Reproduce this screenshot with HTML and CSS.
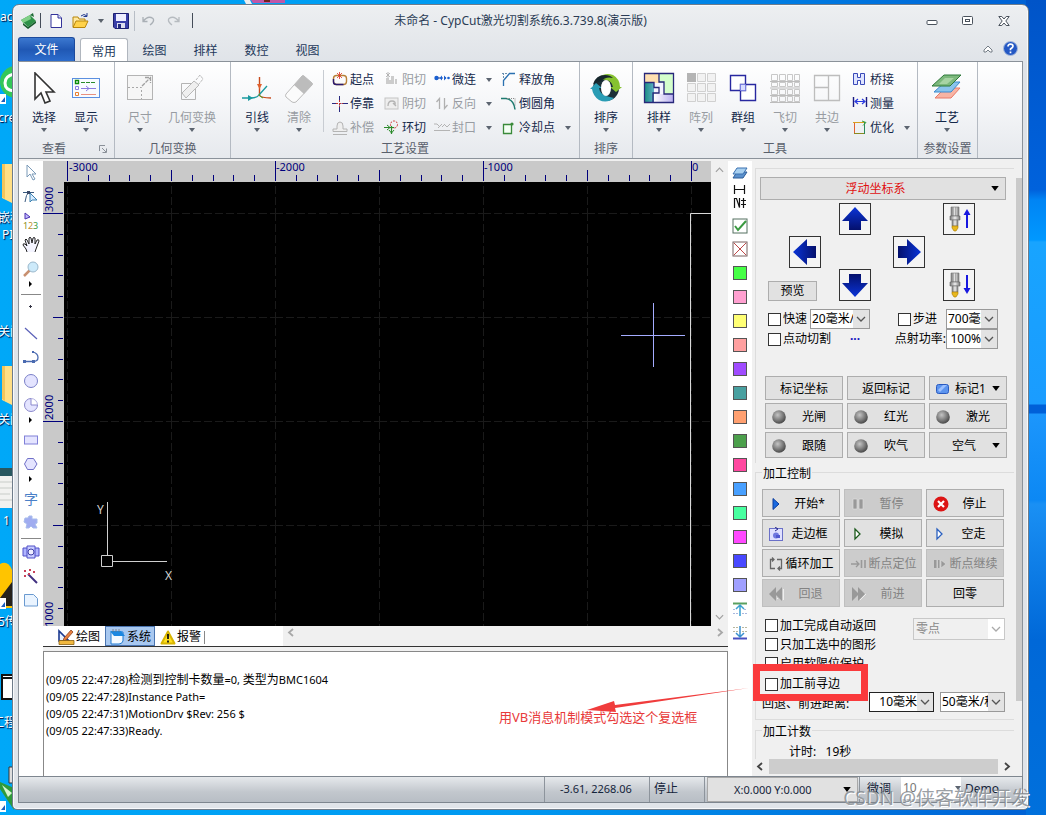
FILE: index.html
```html
<!DOCTYPE html>
<html lang="zh-CN">
<head>
<meta charset="utf-8">
<title>未命名 - CypCut激光切割系统6.3.739.8(演示版)</title>
<link rel="stylesheet" href="styles.css">
</head>
<body>
<svg class="defs" aria-hidden="true">
  <defs>
    <linearGradient id="navy" x1="0" y1="0" x2="0" y2="1"><stop offset="0" stop-color="#0a34d8"/><stop offset="1" stop-color="#04106c"/></linearGradient>
    <radialGradient id="ball" cx=".4" cy=".35" r=".65"><stop offset="0" stop-color="#c4c4c4"/><stop offset=".6" stop-color="#7c7c7c"/><stop offset="1" stop-color="#4a4a4a"/></radialGradient>
    <linearGradient id="steel"><stop offset="0" stop-color="#777"/><stop offset=".5" stop-color="#eee"/><stop offset="1" stop-color="#777"/></linearGradient>
    <linearGradient id="lilac"><stop offset="0" stop-color="#fff"/><stop offset="1" stop-color="#b9b0f0"/></linearGradient>
    <linearGradient id="teal"><stop offset="0" stop-color="#1f8f86"/><stop offset="1" stop-color="#7fc0e8"/></linearGradient>
  </defs>
  <symbol id="tri" viewBox="0 0 6 4"><path d="M0 0h6L3 4z" fill="currentColor"/></symbol>
  <symbol id="chev" viewBox="0 0 10 6"><path d="M1 1l4 4 4-4" fill="none" stroke="currentColor" stroke-width="1.3"/></symbol>
  <symbol id="prev" viewBox="0 0 8 9"><path d="M6 1L2 4.500 6 8" fill="none" stroke="currentColor" stroke-width="1.8"/></symbol>
  <symbol id="next" viewBox="0 0 8 9"><path d="M2 1l4 3.500L2 8" fill="none" stroke="currentColor" stroke-width="1.8"/></symbol>
  <symbol id="lamp" viewBox="0 0 14 14"><circle cx="7" cy="7" r="6.800" fill="url(#ball)"/></symbol>
  <symbol id="arrow" viewBox="0 0 30 30"><path d="M15 3l13 14h-7v9H9v-9H2z" fill="url(#navy)"/></symbol>
  <symbol id="head" viewBox="0 0 12 26"><path d="M2 1h8v9H2z" fill="url(#steel)" stroke="#777" stroke-width=".6"/><path d="M4 1v9M6.500 1v9" stroke="#888" stroke-width=".6"/><path d="M1 10h10v4H1z" fill="url(#steel)" stroke="#666" stroke-width=".6"/><path d="M3 14h6v6H3z" fill="url(#steel)" stroke="#777" stroke-width=".6"/><path d="M3 20h6v2l-2 3H5l-2-3z" fill="#e8b820" stroke="#a87800" stroke-width=".6"/></symbol>
</svg>

<div class="desktop" aria-hidden="true">
  <span class="d-text d1">ac</span>
  <svg class="d-icon d2" width="14" height="42" viewBox="0 0 14 42"><circle cx="16" cy="16" r="16" fill="#34c759"/><path d="M14 8q-9 2-9 9t9 8" fill="none" stroke="#fff" stroke-width="3"/><path d="M0 28h6v10H0z" fill="#fff"/><path d="M1 36l4-5v5z" fill="#1c5fc0"/></svg>
  <span class="d-text d3">cre</span>
  <svg class="d-icon d4" width="14" height="42" viewBox="0 0 14 42"><path d="M2 1h12v40L2 35z" fill="#ffdf86"/><path d="M2 1h3v35l-3-2z" fill="#f3c55b"/></svg>
  <span class="d-text d5">嵌程</span>
  <span class="d-text d6">PI</span>
  <span class="d-text d7">关闭</span>
  <svg class="d-icon d8" width="14" height="42" viewBox="0 0 14 42"><path d="M2 1h12v40L2 35z" fill="#ffdf86"/><path d="M2 1h3v35l-3-2z" fill="#f3c55b"/></svg>
  <span class="d-text d9">关闭</span>
  <svg class="d-icon d10" width="14" height="40" viewBox="0 0 14 40"><path d="M0 0h14v40H0z" fill="#f2f2f0"/><path d="M0 0h14v8H0z" fill="#285860"/><path d="M0 14h12M0 20h12M0 26h10M0 32h12" stroke="#c8ccc8"/></svg>
  <span class="d-text d11">1</span>
  <svg class="d-icon d12" width="14" height="48" viewBox="0 0 14 48"><path d="M0 2q8-4 12 6v38H0z" fill="#ffc400"/><path d="M6 28l6-8v24H0v-8z" fill="#26221c"/><path d="M0 36h6v11H0z" fill="#fff"/><path d="M1 45l4-5v5z" fill="#1c5fc0"/></svg>
  <span class="d-text d13">5传</span>
  <svg class="d-icon d14" width="14" height="30" viewBox="0 0 14 30"><path d="M2 2h14v24H2z" fill="#fff" stroke="#111" stroke-width="2"/><path d="M2 5h12" stroke="#111" stroke-width="2"/></svg>
  <span class="d-text d15">工程</span>
  <svg class="d-icon d16" width="14" height="48" viewBox="0 0 14 48"><path d="M9 2h5v16H9z" fill="#ddd" stroke="#333"/><path d="M0 17l14 6v22L0 24z" fill="#2f9a3a"/><path d="M2 20l10 8-4 4z" fill="#d8f5d0"/><path d="M0 36h6v11H0z" fill="#fff"/><path d="M1 45l4-5v5z" fill="#1c5fc0"/></svg>
  <svg class="d-icon d17" width="42" height="4" viewBox="0 0 42 4"><path d="M0 0h6l2 4H2z" fill="#eee"/><path d="M7 0h34v3H9z" fill="#c058a8"/><path d="M20 0h6v2h-6z" fill="#702020"/></svg>
</div>

<div class="window">
  <header class="titlebar">
    <div class="quick">
      <svg width="18" height="16" viewBox="0 0 18 16"><path d="M1 7l9-5 6 6-8 6z" fill="#2e9148"/><path d="M1 7l9-5 1 4-8 4z" fill="#7fcf86"/><path d="M10 2l3-2 1 4z" fill="#1d6b34"/><path d="M3 10l5 4 8-6v2l-8 6-5-4z" fill="#175a2c"/></svg>
      <i class="bar"></i>
      <button aria-label="新建"><svg width="12" height="14" viewBox="0 0 12 14"><path d="M1 .500h7l3.500 3.500v9.500H1z" fill="#fff" stroke="#33339a"/><path d="M8 .500v3.500h3.500" fill="#dfe4ff" stroke="#33339a"/></svg></button>
      <button aria-label="打开"><svg width="17" height="16" viewBox="0 0 17 16"><path d="M1 14V4h5l1 2h6v3" fill="#ffe9a0" stroke="#b8860b"/><path d="M1 14.500l3-6.500h12l-3 6.500z" fill="#ffd24a" stroke="#b8860b"/><path d="M9 3q3-3 6 0M15 0v3.500h-3.500" fill="none" stroke="#223a90"/></svg></button>
      <svg class="tri" width="6" height="4"><use href="#tri"/></svg>
      <button aria-label="保存"><svg width="16" height="16" viewBox="0 0 16 16"><path d="M.500.500h15v15H2L.500 14z" fill="#3a3fa8" stroke="#1c1f70"/><path d="M3 1h10v7H3z" fill="#eef"/><path d="M4 10h8v5H4z" fill="#dde"/><path d="M5 11h3v4H5z" fill="#222a80"/></svg></button>
      <i class="bar light"></i>
      <button disabled aria-label="撤销"><svg width="14" height="10" viewBox="0 0 14 10"><path d="M1 1v4.500h4.500M1 5.500Q6-1 11 2.500q2 3-3 6.500" fill="none" stroke="#aab0b6" stroke-width="1.300"/></svg></button>
      <button disabled aria-label="重做"><svg width="14" height="10" viewBox="0 0 14 10"><path d="M13 1v4.500H8.500M13 5.500Q8-1 3 2.500q-2 3 3 6.500" fill="none" stroke="#b6bbc0" stroke-width="1.300"/></svg></button>
      <i class="bar"></i>
    </div>
    <h1>未命名 - CypCut激光切割系统6.3.739.8(演示版)</h1>
    <div class="winbtns">
      <button aria-label="最小化"><svg width="12" height="12" viewBox="0 0 12 12"><rect x="1" y="5.500" width="10" height="4" rx="1" fill="#fff" stroke="#4a525c"/></svg></button>
      <button aria-label="还原"><svg width="12" height="12" viewBox="0 0 12 12"><rect x=".500" y="1.500" width="10" height="8" rx="1" fill="#fff" stroke="#4a525c"/><rect x="3.500" y="4.500" width="4" height="2" fill="none" stroke="#4a525c"/></svg></button>
      <button aria-label="关闭"><svg width="12" height="12" viewBox="0 0 12 12"><path d="M.800 1.500h3L6 4l2.200-2.500h3L7.800 6l3.400 4.500h-3L6 8l-2.200 2.500h-3L4.200 6z" fill="#fff" stroke="#4a525c"/></svg></button>
    </div>
  </header>

  <nav class="tabs">
    <button class="file">文件</button>
    <button class="on">常用</button>
    <button>绘图</button>
    <button>排样</button>
    <button>数控</button>
    <button>视图</button>
    <span class="help">
      <svg width="10" height="8" viewBox="0 0 10 8"><path d="M1 5l4-4 4 4v2H7L5 5 3 7H1z" fill="#fff" stroke="#66707a" stroke-width=".9"/></svg>
      <svg width="15" height="15" viewBox="0 0 15 15"><circle cx="7.500" cy="7.500" r="7" fill="#2458c4" stroke="#a9bbdc"/><path d="M5 5.500q0-2.300 2.500-2.300T10 5.300Q10 6.500 7.500 8v1.200M7.500 10.500v1.700" fill="none" stroke="#fff" stroke-width="1.700"/></svg>
    </span>
  </nav>

  <section class="ribbon">
    <div class="group g-view">
      <div class="tools">
        <button class="big"><svg width="32" height="32" viewBox="0 0 32 32"><path d="M7 1v26l6-6 4 10 5-2-4-9h8z" fill="#fff" stroke="#333" stroke-width="1.600"/></svg>选择<svg class="tri" width="6" height="4"><use href="#tri"/></svg></button>
        <button class="big"><svg width="32" height="32" viewBox="0 0 32 32"><rect x="2.500" y="6.500" width="27" height="19" fill="#f8fbff" stroke="#5b8fe0"/><path d="M5.500 8.500h3v3h-3z" fill="none" stroke="#0a8a0a" stroke-width="1.400"/><path d="M5.500 14.500h3v3h-3z" fill="none" stroke="#8a7ae0"/><path d="M5.500 20.500h3v3h-3z" fill="none" stroke="#e88030"/><path d="M11 10.500h15" stroke="#2a8a2a" stroke-dasharray="4 1"/><path d="M11 16.500h15M16 14l3 2.500-3 2.500" stroke="#8a7ae0" fill="none"/><path d="M11 22.500h15" stroke="#e89080"/></svg>显示<svg class="tri" width="6" height="4"><use href="#tri"/></svg></button>
      </div>
      <div class="cap">查看<svg class="launch" width="8" height="8" viewBox="0 0 8 8"><path d="M.500 6V.500H6M3 3l4 4M7.500 3.500v4h-4" fill="none" stroke="#8a9098"/></svg></div>
    </div>
    <div class="group g-geo">
      <div class="tools">
        <button class="big" disabled><svg width="32" height="32" viewBox="0 0 32 32"><rect x="3.500" y="3.500" width="25" height="24" fill="#f6f6f6" stroke="#b4b4b4"/><path d="M4 15.500h13.500V27" fill="none" stroke="#a8a8a8" stroke-dasharray="2 2"/><path d="M18 14l8-8M21 5.500h5.500V11" fill="none" stroke="#a0a0a0" stroke-width="1.300" stroke-dasharray="4 1"/></svg>尺寸<svg class="tri" width="6" height="4"><use href="#tri"/></svg></button>
        <button class="big wide" disabled><svg width="32" height="32" viewBox="0 0 32 32"><path d="M5.500 11.500h14v16h-14z" fill="none" stroke="#b4b4b4"/><path d="M6 21L18 9l5 4-13 13z" fill="#efefef" stroke="#b8b8b8"/><path d="M20 8l4-5 3 4-4 5" fill="none" stroke="#b8b8b8" stroke-dasharray="3 1"/></svg>几何变换<svg class="tri" width="6" height="4"><use href="#tri"/></svg></button>
      </div>
      <div class="cap">几何变换</div>
    </div>
    <div class="group g-tech">
      <div class="tools">
        <button class="big"><svg width="32" height="32" viewBox="0 0 32 32"><path d="M18.500 5v18" stroke="#c84a1c" stroke-width="1.400"/><path d="M16 12h5l-2.500 5z" fill="#e0602c"/><path d="M1 26h9q6 0 8-3l8-9" fill="none" stroke="#1a9aa0" stroke-width="1.300"/><path d="M7 23l5 3-5 3z" fill="#1a9aa0"/><path d="M18 23q2 3 12 3" fill="none" stroke="#c84a1c" stroke-width="1.300"/><path d="M18 22q1 3 4 4" fill="none" stroke="#4aa020"/></svg>引线<svg class="tri" width="6" height="4"><use href="#tri"/></svg></button>
        <button class="big" disabled><svg width="32" height="32" viewBox="0 0 32 32"><path d="M3 22L19 4q1-1 2 0l8 7q1 1 0 2L13 30q-2 1-4 0l-6-5q-1-1 0-3z" fill="#fbfbfb" stroke="#bbb"/><path d="M11 13l8-9q1-1 2 0l8 7q1 1 0 2l-8 9z" fill="#bcbcbc"/></svg>清除<svg class="tri" width="6" height="4"><use href="#tri"/></svg></button>
        <i class="split"></i>
        <div class="small-grid">
          <button><svg width="16" height="16" viewBox="0 0 16 16"><rect x="1.500" y="3.500" width="13" height="9" rx="3" fill="none" stroke="#b88038" stroke-width="1.400"/><path d="M1.500 7v3q0 2.500 3 2.500h7" fill="none" stroke="#2a1a70" stroke-width="1.400"/><path d="M7.500 0v7M5 1l5 5M10 1L5 6" stroke="#e03020" stroke-width=".8"/></svg>起点</button>
          <button disabled><svg width="16" height="16" viewBox="0 0 16 16"><path d="M2 12V6h3v2h2V4h3v8zM11 12V7h2v5z" fill="#ccc"/><path d="M2 1l4 4M6 1L2 5M4 0v6" stroke="#aaa" stroke-width=".8"/></svg>阳切</button>
          <button><svg width="16" height="16" viewBox="0 0 16 16"><circle cx="2.500" cy="6" r="2.200" fill="#1a60d0"/><path d="M4 6h8" stroke="#1a3a90" stroke-dasharray="2 1"/><path d="M8 3.500L5.500 6 8 8.500zM10 3.500v5L12.500 6z" fill="#1a60d0"/><circle cx="14.500" cy="6" r="1.300" fill="#1a60d0"/></svg>微连<svg class="tri side" width="6" height="4"><use href="#tri"/></svg></button>
          <button><svg width="16" height="16" viewBox="0 0 16 16"><path d="M2.500 14V8.500L8.500 1.500H14" fill="none" stroke="#2a70b0" stroke-width="1.300"/><path d="M1 1.500h6M2.500 1v6" stroke="#6a90b0" stroke-dasharray="2 1"/></svg>释放角</button>
          <button><svg width="16" height="16" viewBox="0 0 16 16"><path d="M0 7.500h5.500M9.500 7.500H16M7.500 9.500V16M7.500 0v4" stroke="#2a2a80"/><path d="M7.500 4v7M4 7.500h7" stroke="#c03030" stroke-dasharray="2 1"/></svg>停靠</button>
          <button disabled><svg width="16" height="16" viewBox="0 0 16 16"><rect x="1" y="2" width="13" height="11" fill="#eee" stroke="#c4c4c4"/><path d="M4 10q0-5 4-5t3 4M9 7l3 3" fill="none" stroke="#b4b4b4" stroke-width="1.300"/></svg>阴切</button>
          <button disabled><svg width="16" height="16" viewBox="0 0 16 16"><path d="M5.500 13V2.500L2.500 6M10.500 2v10.500l3-3.500" fill="none" stroke="#b0b0b0" stroke-width="1.300"/></svg>反向<svg class="tri side" width="6" height="4"><use href="#tri"/></svg></button>
          <button><svg width="16" height="16" viewBox="0 0 16 16"><path d="M0 2.500h5q8 1 9 11" fill="none" stroke="#1e7a70" stroke-width="1.500"/><path d="M6 2.500h8V10" fill="none" stroke="#888" stroke-dasharray="1 1"/></svg>倒圆角</button>
          <button disabled><svg width="16" height="16" viewBox="0 0 16 16"><path d="M1 14.500h14M1 11.500h14V9h-4V6q0-4-3-4T5 6v3H1z" fill="#eee" stroke="#b4b4b4"/></svg>补偿</button>
          <button><svg width="16" height="16" viewBox="0 0 16 16"><circle cx="10" cy="4.500" r="3.500" fill="none" stroke="#d03030" stroke-dasharray="2 1"/><path d="M0 7.500h10M7.500 6v8" stroke="#2a8a2a" stroke-width="1.200"/><path d="M3 5l3 2.500L3 10M5 10l2.500 3L10 10" fill="none" stroke="#2a8a2a"/></svg>环切</button>
          <button disabled><svg width="16" height="16" viewBox="0 0 16 16"><path d="M0 4h3l3 3M4 8l4-4M8 7l3-3M10 4l3 3 3-3M0 10.500h16" fill="none" stroke="#b4b4b4"/></svg>封口<svg class="tri side" width="6" height="4"><use href="#tri"/></svg></button>
          <button><svg width="16" height="16" viewBox="0 0 16 16"><path d="M2.500 4.500h8v9h-8z" fill="#f4fff4" stroke="#3a8a3a" stroke-width="1.300"/><circle cx="11" cy="4" r="1.600" fill="#3a8a3a"/></svg>冷却点<svg class="tri side" width="6" height="4"><use href="#tri"/></svg></button>
        </div>
      </div>
      <div class="cap">工艺设置</div>
    </div>
    <div class="group g-sort">
      <div class="tools">
        <button class="big"><svg width="32" height="32" viewBox="0 0 32 32"><circle cx="16" cy="16" r="13" fill="#1c3038"/><path d="M8 6Q15 0 23 3q7 4 7 12h2l-6 5-6-5h3q-1-6-7-7-5-1-8-2z" fill="#86c230"/><path d="M24 26Q17 32 9 28q-6-4-7-11H0l6-6 6 5H9q1 6 7 8 4 1 8 2z" fill="#2a9cb4"/><path d="M3 12Q6 3 15 3q5 0 8 3-7-2-12 3z" fill="#16262c"/><ellipse cx="16" cy="16" rx="5" ry="8" fill="#fff"/></svg>排序<svg class="tri" width="6" height="4"><use href="#tri"/></svg></button>
      </div>
      <div class="cap">排序</div>
    </div>
    <div class="group g-tool">
      <div class="tools">
        <button class="big"><svg width="32" height="32" viewBox="0 0 32 32"><path d="M2 2h14v9H2z" fill="#ffe0b0"/><path d="M16 2h14v20h-9V11h-5z" fill="#d4ffcc"/><path d="M2 11h9v5h5v5h-5v9H2z" fill="url(#teal)"/><path d="M11 11h10v11H11z" fill="#f4f4ff"/><path d="M11 22h19v8H11z" fill="url(#lilac)"/><path d="M1.500 1.500h29v29h-29zM16 1v9h5v12h9M1 10.500h10v5h5v5.500h-6V30" fill="none" stroke="#28287a" stroke-width="1.300"/></svg>排样<svg class="tri" width="6" height="4"><use href="#tri"/></svg></button>
        <button class="big" disabled><svg width="32" height="32" viewBox="0 0 32 32"><path d="M2.500 1.500h8v8h-8zM12.500 1.500h8v8h-8zM22.500 1.500h8v8h-8zM2.500 11.500h8v8h-8zM12.500 11.500h8v8h-8zM22.500 11.500h8v8h-8zM2.500 21.500h8v8h-8zM12.500 21.500h8v8h-8zM22.500 21.500h8v8h-8z" fill="#f2f2f2" stroke="#d0d0d0"/><path d="M2 1h9v9H2z" fill="#b4b4b4"/></svg>阵列<svg class="tri" width="6" height="4"><use href="#tri"/></svg></button>
        <button class="big"><svg width="32" height="32" viewBox="0 0 32 32"><path d="M3.500 3.500h15v15h-15zM13.500 12.500h15v16h-15z" fill="#fff" stroke="#2828a0" stroke-width="1.400"/><path d="M13.500 12.500h5v6h-5z" fill="#d8dcff" stroke="#7a80e0"/></svg>群组<svg class="tri" width="6" height="4"><use href="#tri"/></svg></button>
        <button class="big" disabled><svg width="32" height="32" viewBox="0 0 32 32"><path d="M2.500 2.500h6v6h-6zM10.500 2.500h6v6h-6zM18.500 2.500h5v6h-5zM25.500 2.500h5v6h-5zM2.500 10.500h6v4h-6zM10.500 10.500h6v4h-6zM18.500 10.500h5v4h-5zM25.500 10.500h5v4h-5zM2.500 17.500h6v5h-6zM10.500 17.500h6v5h-6zM18.500 17.500h5v5h-5zM25.500 17.500h5v5h-5zM2.500 24.500h6v5h-6zM10.500 24.500h6v5h-6zM18.500 24.500h5v5h-5zM25.500 24.500h5v5h-5z" fill="none" stroke="#c8c8c8"/><path d="M1 9.500h30M1 16h30M1 23.500h30M1 30.500h30" stroke="#bcbcbc"/></svg>飞切<svg class="tri" width="6" height="4"><use href="#tri"/></svg></button>
        <button class="big" disabled><svg width="32" height="32" viewBox="0 0 32 32"><path d="M3.500 3.500h25v25h-25zM17.500 3v25M3 15.500h14" fill="none" stroke="#bdbdbd" stroke-width="1.300"/></svg>共边<svg class="tri" width="6" height="4"><use href="#tri"/></svg></button>
        <div class="small-col">
          <button><svg width="16" height="16" viewBox="0 0 16 16"><path d="M1.500 1.500h4v4h3v-4h4v11h-4v-4h-3v4h-4z" fill="#dfe4ff" stroke="#3a4ab8"/></svg>桥接</button>
          <button><svg width="16" height="16" viewBox="0 0 16 16"><path d="M1.500 1v10M14.500 1v10" stroke="#1a1a80" stroke-width="1.400"/><path d="M3 5.500h10M6 3L3 5.500 6 8M10 3l3 2.500L10 8" fill="none" stroke="#2a3ae0" stroke-width="1.200"/></svg>测量</button>
          <button><svg width="16" height="16" viewBox="0 0 16 16"><path d="M2.500 13V2.500" stroke="#e06030"/><path d="M1 2.500h12" stroke="#d8a020"/><path d="M12.500 2v12" stroke="#2a8a5a"/><path d="M2 13.500h10" stroke="#888a20"/><path d="M10 1l4 1.500-3 3" fill="none" stroke="#3aa03a"/></svg>优化<svg class="tri side" width="6" height="4"><use href="#tri"/></svg></button>
        </div>
      </div>
      <div class="cap">工具</div>
    </div>
    <div class="group g-param">
      <div class="tools">
        <button class="big"><svg width="32" height="32" viewBox="0 0 32 32"><path d="M4 26L14 16h15L20 26z" fill="#f8b4a4" stroke="#e87a68"/><path d="M3 20l11-10h15L20 20z" fill="#8ac4ec" stroke="#3a8ad0"/><path d="M1 14L13 3h17L19 14z" fill="#7cb87c" stroke="#2f7a3a"/><path d="M8 12l6-6h9l-7 6z" fill="#a8d4a4"/></svg>工艺<svg class="tri" width="6" height="4"><use href="#tri"/></svg></button>
      </div>
      <div class="cap">参数设置</div>
    </div>
  </section>

  <main class="work">
    <div class="toolbox">
      <button aria-label="选择"><svg width="16" height="18" viewBox="0 0 16 18"><path d="M4 1v12l3-3 3 6 2-1-3-5h4z" fill="#fff" stroke="#7a9ab8"/></svg></button>
      <button aria-label="节点编辑"><svg width="16" height="16" viewBox="0 0 16 16"><path d="M0 3.500h11M2 13Q3 5 6 3" fill="none" stroke="#3a5a80"/><path d="M7 4v9l2-2h5z" fill="#d8ecff" stroke="#3a80b0"/><path d="M4 2h3v3H4z" fill="#3a4a68"/></svg></button>
      <button aria-label="序号"><svg width="16" height="18" viewBox="0 0 16 18"><path d="M2 1v6l5-2z" fill="#c0b8ff" stroke="#4a30b0"/><text x="0" y="17" font-size="9" fill="#909020">1</text><text x="5" y="17" font-size="9" fill="#c09030">2</text><text x="10" y="17" font-size="9" fill="#3a9a3a">3</text></svg></button>
      <button aria-label="平移"><svg width="18" height="18" viewBox="0 0 18 18"><path d="M5 16l-1-3-3-4q0-2 2-1l2 2-2-6q1-2 2 0l2 4V2q1-1.500 2 0l1 5 1-5q1-1 2 0v6l2-4q2-1 2 1l-3 8-1 3" fill="#f4f4ff" stroke="#222"/></svg></button>
      <button aria-label="缩放"><svg width="16" height="16" viewBox="0 0 16 16"><path d="M1 15l6-6" stroke="#c89070" stroke-width="2.500"/><circle cx="10" cy="6" r="5" fill="#cdeafa" stroke="#9ab8cc"/></svg></button>
      <i class="more"></i>
      <hr>
      <button aria-label="点"><svg width="16" height="16" viewBox="0 0 16 16"><path d="M6 7.500h3M7.500 6v3" stroke="#334"/></svg></button>
      <button class="gap2" aria-label="直线"><svg width="16" height="16" viewBox="0 0 16 16"><path d="M2 3l12 11" stroke="#5a60b8" stroke-width="1.200"/></svg></button>
      <button aria-label="多段线"><svg width="18" height="16" viewBox="0 0 18 16"><path d="M2 12.500h9q5 0 5-4T11 3" fill="none" stroke="#4a6ab0" stroke-width="1.300"/><path d="M1 11h3v3H1zM10 11h3v3h-3zM10 2h2v2h-2z" fill="#4a6ab0"/></svg></button>
      <button aria-label="圆"><svg width="16" height="16" viewBox="0 0 16 16"><circle cx="8" cy="8" r="6.500" fill="#e4e4ff" stroke="#7a80c8"/></svg></button>
      <button aria-label="圆弧"><svg width="16" height="16" viewBox="0 0 16 16"><path d="M8 1.500a6.500 6.500 0 1 0 6.500 6.500H8z" fill="#e4e4ff" stroke="#8a88cc"/><path d="M8 1.500a6.500 6.500 0 0 1 6.500 6.500" fill="none" stroke="#b0aee0"/></svg></button>
      <i class="more"></i>
      <button class="gap5" aria-label="矩形"><svg width="16" height="16" viewBox="0 0 16 16"><rect x="1.500" y="4" width="13" height="8" fill="#e4e4ff" stroke="#8080d8"/></svg></button>
      <button aria-label="多边形"><svg width="16" height="16" viewBox="0 0 16 16"><path d="M4.500 2.500h6L14 8l-3.500 5.500h-6L1.500 8z" fill="#e4e4ff" stroke="#7070c8"/></svg></button>
      <i class="more"></i>
      <button class="gap5 glyph" aria-label="文字">字</button>
      <button aria-label="零件"><svg width="16" height="16" viewBox="0 0 16 16"><path d="M2 3h3l1-2h3v3h5v4l-2 1 2 4h-4l-2-2-2 2H3l1-4-3-2z" fill="#a0acf0" stroke="#a8bcec"/></svg></button>
      <hr class="near">
      <button aria-label="布局"><svg width="18" height="14" viewBox="0 0 18 14"><path d="M1 3h16v8H1z" fill="#b0b4ff" stroke="#5050c8"/><path d="M5 1h8v12H5z" fill="#c8ccff" stroke="#5050c8"/><circle cx="9" cy="7" r="3" fill="#eef" stroke="#4040a8"/></svg></button>
      <button aria-label="魔棒"><svg width="16" height="16" viewBox="0 0 16 16"><path d="M5 6l9 9" stroke="#403080" stroke-width="2"/><path d="M1 2h2v2H1zM6 1h2v2H6zM10 3h2v2h-2zM1 7h2v2H1zM5 5h2v2H5z" fill="#c84058"/></svg></button>
      <button aria-label="图纸"><svg width="16" height="14" viewBox="0 0 16 14"><path d="M1.500 1.500h9l4 4v7.500h-13z" fill="#eaf4ff" stroke="#6a9ad0"/></svg></button>
    </div>

    <div class="center">
      <div class="drawing">
        <svg class="hruler" width="100%" height="20">
          <defs><pattern id="hp" x="24" y="0" width="208" height="20" patternUnits="userSpaceOnUse"><path d="M.500 0v20M21.500 14v6M42.500 14v6M62.500 14v6M83.500 14v6M104.500 9v11M125.500 14v6M146.500 14v6M166.500 14v6M187.500 14v6" stroke="#00007c"/></pattern></defs>
          <rect x="24" width="100%" height="20" fill="url(#hp)"/>
          <text x="26" y="10">-3000</text><text x="233" y="10">-2000</text><text x="441" y="10">-1000</text><text x="649" y="10">0</text>
        </svg>
        <svg class="vruler" width="21" height="100%">
          <defs><pattern id="vp" x="0" y="31" width="21" height="208" patternUnits="userSpaceOnUse"><path d="M0 .500h20M15 21.500h5M15 42.500h5M15 62.500h5M15 83.500h5M10 104.500h10M15 125.500h5M15 146.500h5M15 166.500h5M15 187.500h5" stroke="#00007c"/></pattern></defs>
          <rect width="21" height="100%" fill="url(#vp)"/>
          <text transform="translate(10 30) rotate(-90)">3000</text><text transform="translate(10 238) rotate(-90)">2000</text><text transform="translate(10 445) rotate(-90)">1000</text>
        </svg>
        <svg class="canvas" width="100%" height="100%">
          <defs><pattern id="grid" x="3" y="31" width="104" height="104" patternUnits="userSpaceOnUse"><path d="M.500 0v104M0 .500h104" stroke="#1a1a1a" stroke-dasharray="8 3"/></pattern></defs>
          <rect width="100%" height="100%" fill="url(#grid)"/>
          <path d="M626.500 445V31.500H900" fill="none" stroke="#d8d8d8"/>
          <path d="M557 153.500h64M589.500 121v64" stroke="#a4acff"/>
          <path d="M43.500 320v53M49 379.500h54M37.500 373.500h11v11h-11z" fill="none" stroke="#d0d0d0"/>
          <text x="33" y="332">Y</text><text x="101" y="398">X</text>
        </svg>
        <div class="vscroll"><svg width="9" height="6"><use href="#chev" class="flip"/></svg><svg width="9" height="6"><use href="#chev"/></svg></div>
      </div>
      <div class="logtabs">
        <button><svg width="17" height="16" viewBox="0 0 17 16"><path d="M1 2v10h10z" fill="#e8f0ff" stroke="#1c3a90" stroke-width="1.600"/><path d="M6 9l7-8 2 2-7 8-3 1z" fill="#e88040" stroke="#7a3010" stroke-width=".7"/><path d="M1 11.500h15v4H1z" fill="#f0b840" stroke="#8a6010" stroke-width=".8"/></svg>绘图</button>
        <button class="on"><svg width="17" height="16" viewBox="0 0 17 16"><path d="M2 3h12v9q-1 3-4 3H2z" fill="#f4faff" stroke="#1c78d0"/><path d="M1 2h11l4 5H5z" fill="#1c88e0"/><path d="M4 0v3M7 0v3M10 0v3" stroke="#777" stroke-width=".8"/></svg>系统</button>
        <button><svg width="16" height="15" viewBox="0 0 16 15"><path d="M8 1.500l6.500 12h-13z" fill="#ffe020" stroke="#d8b400" stroke-linejoin="round" stroke-width="2"/><path d="M8 4v5M8 10.500v2" stroke="#111" stroke-width="1.800"/></svg>报警</button>
        <i class="endbar"></i>
        <div class="hscroll"><svg width="8" height="9"><use href="#prev"/></svg><svg width="8" height="9"><use href="#next"/></svg></div>
      </div>
      <div class="log">
        <p>(09/05 22:47:28)<span class="zh">检测到控制卡数量</span>=0, <span class="zh">类型为</span>BMC1604</p>
        <p>(09/05 22:47:28)Instance Path=</p>
        <p>(09/05 22:47:31)MotionDrv $Rev: 256 $</p>
        <p>(09/05 22:47:33)Ready.</p>
      </div>
    </div>

    <div class="layers">
      <button aria-label="图层"><svg width="16" height="14" viewBox="0 0 16 14"><path d="M1 12l4-6h10l-4 6z" fill="#5a90cc" stroke="#2c5c98"/><path d="M1 8l4-6h10l-4 6z" fill="#a8d0f0" stroke="#3a70b0"/></svg></button>
      <button aria-label="显示序号"><svg width="14" height="24" viewBox="0 0 14 24"><path d="M1.500 0v9M11.500 0v9M1.500 4.500h10M1.500 23v-9.500h2l3 9V13M8 15.500h5M8 19.500h5M10.500 13v10" fill="none" stroke="#111" stroke-width="1.200"/></svg></button>
      <button class="mt4" aria-label="加工"><svg width="16" height="16" viewBox="0 0 16 16"><rect x="1" y="1" width="14" height="14" fill="#fff" stroke="#557060"/><path d="M3 8l3 4 8-9" fill="none" stroke="#3a9a40" stroke-width="2"/></svg></button>
      <button aria-label="不加工"><svg width="16" height="16" viewBox="0 0 16 16"><rect x="1" y="1" width="14" height="14" fill="#fff" stroke="#7a6060"/><path d="M2 2l12 12M14 2L2 14" stroke="#c04848"/></svg></button>
      <button class="sw c1" aria-label="图层1"></button><button class="sw c2" aria-label="图层2"></button><button class="sw c3" aria-label="图层3"></button><button class="sw c4" aria-label="图层4"></button><button class="sw c5" aria-label="图层5"></button><button class="sw c6" aria-label="图层6"></button><button class="sw c7" aria-label="图层7"></button><button class="sw c8" aria-label="图层8"></button><button class="sw c9" aria-label="图层9"></button><button class="sw c10" aria-label="图层10"></button><button class="sw c11" aria-label="图层11"></button><button class="sw c12" aria-label="图层12"></button><button class="sw c13" aria-label="图层13"></button><button class="sw c14" aria-label="图层14"></button>
      <button aria-label="最先加工"><svg width="16" height="16" viewBox="0 0 16 16"><path d="M1 2.500h14" stroke="#5aa060" stroke-width="2"/><path d="M8 4v11M4 8l4-4 4 4" fill="none" stroke="#3aa0d0" stroke-width="1.500"/><path d="M1 8.500h3M12 8.500h3M1 12.500h5M10 12.500h5" stroke="#a8b8e0" stroke-dasharray="2 1"/></svg></button>
      <button aria-label="最后加工"><svg width="16" height="16" viewBox="0 0 16 16"><path d="M1 13.500h14" stroke="#4a50c0" stroke-width="2"/><path d="M8 1v11M4 8l4 4 4-4" fill="none" stroke="#3a90d0" stroke-width="1.500"/><path d="M1 2.500h5M10 2.500h5M1 6.500h5M10 6.500h5" stroke="#b8b8a0" stroke-dasharray="2 1"/></svg></button>
    </div>

    <aside class="panel">
      <div class="pane">
        <section class="box box1">
          <label class="combo coord"><select aria-label="坐标系"><option>浮动坐标系</option></select><svg class="tri" width="8" height="5"><use href="#tri"/></svg></label>
          <div class="jog">
            <button class="j-up" aria-label="上"><svg width="30" height="30"><use href="#arrow"/></svg></button>
            <button class="j-left" aria-label="左"><svg width="30" height="30"><use href="#arrow" transform="rotate(-90 15 15)"/></svg></button>
            <button class="j-right" aria-label="右"><svg width="30" height="30"><use href="#arrow" transform="rotate(90 15 15)"/></svg></button>
            <button class="j-down" aria-label="下"><svg width="30" height="30"><use href="#arrow" transform="rotate(180 15 15)"/></svg></button>
            <button class="z-up" aria-label="Z轴上"><svg width="30" height="30" viewBox="0 0 30 30"><use href="#head" x="5" y="2" width="12" height="26"/><path d="M23 24V10" stroke="#1818e0" stroke-width="2"/><path d="M19.500 11L23 5l3.500 6z" fill="#1818e0"/></svg></button>
            <button class="z-down" aria-label="Z轴下"><svg width="30" height="30" viewBox="0 0 30 30"><use href="#head" x="5" y="2" width="12" height="26"/><path d="M23 5v14" stroke="#1818e0" stroke-width="2"/><path d="M19.500 18l3.500 6 3.500-6z" fill="#1818e0"/></svg></button>
            <button class="preview">预览</button>
          </div>
          <div class="opts">
            <label class="check"><input type="checkbox">快速</label>
            <label class="combo"><select aria-label="快速速度"><option>20毫米/秒</option></select><span class="drop"><svg width="10" height="6"><use href="#chev"/></svg></span></label>
            <label class="check step"><input type="checkbox">步进</label>
            <label class="combo last"><select aria-label="步进距离"><option>700毫米</option></select><span class="drop"><svg width="10" height="6"><use href="#chev"/></svg></span></label>
            <label class="check wide"><input type="checkbox">点动切割</label>
            <button class="dots" aria-label="更多">···</button>
            <label class="power" for="power">点射功率:</label>
            <span class="combo last right"><select id="power"><option>100%</option></select><span class="drop"><svg width="10" height="6"><use href="#chev"/></svg></span></span>
          </div>
          <div class="btns marks">
            <button>标记坐标</button>
            <button>返回标记</button>
            <button class="ic"><svg width="13" height="10" viewBox="0 0 13 10"><rect x=".500" y=".500" width="12" height="9" rx="2" fill="#5c94ee" stroke="#2a5ac0"/><path d="M2 6l5-5h4L4 8z" fill="#9cc0ff"/></svg><span>标记1</span><svg class="tri" width="8" height="5"><use href="#tri"/></svg></button>
            <button class="ic lit"><svg width="14" height="14"><use href="#lamp"/></svg><span>光闸</span></button>
            <button class="ic lit"><svg width="14" height="14"><use href="#lamp"/></svg><span>红光</span></button>
            <button class="ic lit"><svg width="14" height="14"><use href="#lamp"/></svg><span>激光</span></button>
            <button class="ic lit"><svg width="14" height="14"><use href="#lamp"/></svg><span>跟随</span></button>
            <button class="ic lit"><svg width="14" height="14"><use href="#lamp"/></svg><span>吹气</span></button>
            <button class="ic"><span>空气</span><svg class="tri" width="8" height="5"><use href="#tri"/></svg></button>
          </div>
        </section>

        <section class="box box2">
          <h2>加工控制</h2>
          <div class="btns ctl">
            <button class="ic"><svg width="14" height="14" viewBox="0 0 14 14"><path d="M4 1.500l6 5.500-6 5.500z" fill="#1a6ae0" stroke="#0c3c9c"/></svg><span>开始*</span></button>
            <button class="ic" disabled><svg width="14" height="14" viewBox="0 0 14 14"><path d="M2 2h4v10H2zM8 2h4v10H8z" fill="#999" stroke="#ddd" stroke-width=".7"/></svg><span>暂停</span></button>
            <button class="ic"><svg width="16" height="16" viewBox="0 0 16 16"><circle cx="8" cy="8" r="7.500" fill="#dc1414"/><path d="M5 5l6 6M11 5l-6 6" stroke="#fff" stroke-width="2.200"/></svg><span>停止</span></button>
            <button class="ic"><svg width="14" height="14" viewBox="0 0 14 14"><rect x=".500" y="1.500" width="13" height="12" fill="#dfe0ff" stroke="#6a70c8"/><circle cx="7" cy="8.500" r="3" fill="#7078e0"/><path d="M7 8h4v3H7z" fill="#5058d0"/><path d="M6 0l3 2-3 2" fill="none" stroke="#28288a"/></svg><span>走边框</span></button>
            <button class="ic"><svg width="14" height="14" viewBox="0 0 14 14"><path d="M4 2l5 5-5 5z" fill="#fff" stroke="#1c5a1c" stroke-width="1.300"/></svg><span>模拟</span></button>
            <button class="ic"><svg width="14" height="14" viewBox="0 0 14 14"><path d="M4 2l5 5-5 5z" fill="#fff" stroke="#2a60c0" stroke-width="1.300"/></svg><span>空走</span></button>
            <button class="ic"><svg width="14" height="14" viewBox="0 0 14 14"><path d="M5 2.500H1.500v9H6M8 2.500h4.500v9H9M3 .500l2 2-2 2M11 9.500l-2 2 2 2" fill="none" stroke="#666" stroke-width="1.300"/></svg><span>循环加工</span></button>
            <button class="ic" disabled><svg width="16" height="14" viewBox="0 0 16 14"><path d="M0 7h7M5 4l3 3-3 3" fill="none" stroke="#999" stroke-width="1.300"/><path d="M10.500 3v8M14 3v8" stroke="#999" stroke-width="1.600"/></svg><span>断点定位</span></button>
            <button class="ic" disabled><svg width="14" height="14" viewBox="0 0 14 14"><path d="M1 3h2.500v8H1zM5 3h1.500v8H5z" fill="#999"/><path d="M8 3l5 4-5 4z" fill="#999" stroke="#ddd" stroke-width=".6"/></svg><span>断点继续</span></button>
            <button class="ic" disabled><svg width="16" height="14" viewBox="0 0 16 14"><path d="M7 0v14L0 7zM13 0v14L6 7z" fill="#999"/><path d="M8 12l1-1M14.500 2v11" stroke="#eee"/></svg><span>回退</span></button>
            <button class="ic" disabled><svg width="16" height="14" viewBox="0 0 16 14"><path d="M1 0v14l7-7zM7 0v14l7-7z" fill="#999"/><path d="M9 13l6-6" stroke="#eee"/></svg><span>前进</span></button>
            <button>回零</button>
          </div>
          <div class="flags">
            <div class="flaglist">
              <label class="check"><input type="checkbox">加工完成自动返回</label>
              <label class="check"><input type="checkbox">只加工选中的图形</label>
              <label class="check"><input type="checkbox">启用软限位保护</label>
            </div>
            <label class="combo zero"><select aria-label="返回点" disabled><option>零点</option></select><span class="drop"><svg width="10" height="6"><use href="#chev"/></svg></span></label>
          </div>
          <div class="dist">
            <label for="dist">回退、前进距离:</label>
            <span class="combo right strong"><select id="dist"><option>10毫米</option></select><span class="drop"><svg width="10" height="6"><use href="#chev"/></svg></span></span>
            <label class="combo"><select aria-label="速度"><option>50毫米/秒</option></select><span class="drop"><svg width="10" height="6"><use href="#chev"/></svg></span></label>
          </div>
          <div class="callout"><label class="check"><input type="checkbox">加工前寻边</label></div>
        </section>

        <section class="box box3">
          <h2>加工计数</h2>
          <p>计时:&nbsp;&nbsp; 19秒</p>
        </section>
      </div>
      <div class="pv"></div>
      <div class="ph"><svg width="8" height="9"><use href="#prev"/></svg><i></i><svg width="8" height="9"><use href="#next"/></svg></div>
    </aside>

    <div class="note">
      <svg width="162" height="26" viewBox="0 0 162 26"><path d="M162 0L28 17l-1-4L0 22l29 2-1-4z" fill="#f03c3c"/></svg>
      <p>用VB消息机制模式勾选这个复选框</p>
    </div>
  </main>

  <footer class="status">
    <span class="pos">-3.61, 2268.06</span>
    <span class="state">停止</span>
    <button class="xy"><span>X:0.000 Y:0.000</span><svg class="tri" width="8" height="5"><use href="#tri"/></svg></button>
    <label class="fine" for="fine">微调</label>
    <span class="finebox"><input id="fine" type="text" value="10"><svg class="tri" width="6" height="4"><use href="#tri"/></svg></span>
    <span class="demo">Demo</span>
  </footer>
</div>
<div class="watermark">CSDN @侠客软件开发</div>
</body>
</html>
```
FILE: styles.css
```css
* { box-sizing: border-box; }

body {
  margin: 0;
  min-height: 100vh;
  position: relative;
  padding: 4px 17px 7px 12px;
  overflow: hidden;
  display: flex;
  font: 12px/16px "Noto Sans", "Noto Sans CJK SC", sans-serif;
  color: #000;
  background:
    linear-gradient(180deg, #0054c8 0, #0062dc 190px, #0084f4 200px, #0098ff 240px, #18a4ff 242px, #1a9cff 404px, #0060d8 405px, #0060d8 413px, #1c96fc 414px, #0c88f4 500px, #1a90f4 504px, #0068d8 640px, #0070dc 100%) right / 20px 100% no-repeat,
    linear-gradient(90deg, #00a8f8, #0098f0 50%, #0060d4);
}

button, select, input { font: inherit; color: inherit; margin: 0; }
button { padding: 0; border: 0; background: none; }
svg { display: block; flex: none; }
p, h1, h2 { margin: 0; font-size: inherit; font-weight: normal; }
.defs { position: absolute; width: 0; height: 0; }

/* desktop behind the window */
.desktop { position: absolute; inset: 0; overflow: hidden; }
.d-text, .d-icon { position: absolute; left: 0; }
.d-text { color: #fff; white-space: nowrap; text-shadow: 1px 1px 1px #003; }
.d-text.d1 { top: 9px; }
.d-icon.d2 { top: 66px; }
.d-text.d3 { top: 110px; left: -2px; }
.d-icon.d4 { top: 163px; }
.d-text.d5 { top: 210px; left: -2px; }
.d-text.d6 { top: 227px; left: 2px; }
.d-text.d7 { top: 324px; left: -2px; }
.d-icon.d8 { top: 365px; }
.d-text.d9 { top: 412px; left: -2px; }
.d-icon.d10 { top: 468px; }
.d-text.d11 { top: 513px; left: 3px; }
.d-icon.d12 { top: 562px; }
.d-text.d13 { top: 614px; left: -2px; }
.d-icon.d14 { top: 673px; }
.d-text.d15 { top: 715px; left: -8px; }
.d-icon.d16 { top: 765px; }
.d-icon.d17 { top: 0; left: 244px; }

.window {
  position: relative;
  flex: 1;
  min-width: 0;
  display: flex;
  flex-direction: column;
  padding: 0 5px 6px;
  border: 1px solid #6f7c8a;
  border-radius: 7px 7px 5px 5px;
  background: linear-gradient(#edeff1, #dfe3e8 60px, #e0e4e9);
  box-shadow: inset 0 0 0 1px #f8fafc;
}

/* title bar */
.titlebar { display: grid; grid-template-columns: 1fr auto 1fr; align-items: center; height: 31px; }
.quick { display: flex; align-items: center; padding-left: 2px; }
.quick .bar { width: 1px; height: 15px; margin: 0 9px 0 2px; background: #444c58; }
.quick .bar.light { height: 20px; margin: 0 7px 0 5px; background: #b8bec6; }
.quick button { margin-right: 10px; }
.quick .tri { margin-right: 9px; color: #5a626c; }
.quick button:nth-of-type(2) { margin-right: 9px; }
.quick button:nth-of-type(3) { margin-right: 0; }
.titlebar h1 { color: #2b3c55; white-space: nowrap; }
.winbtns { display: flex; justify-content: flex-end; gap: 24px; padding-right: 13px; }

/* tabs */
.tabs { display: flex; height: 25px; }
.tabs button { width: 51px; padding-top: 5px; color: #1e395b; }
.tabs .file { width: 57px; margin-top: 1px; padding: 0; border: 1px solid #1c4a9c; border-bottom: 0; border-radius: 3px 3px 0 0; background: linear-gradient(#3c78d0, #2058b4 50%, #2c6ccc); color: #fff; }
.tabs .on { width: 48px; margin: 2px 1px 0 5px; padding-top: 3px; border: 1px solid #b0b6be; border-bottom: 0; border-radius: 3px 3px 0 0; background: #fff; }
.help { display: flex; gap: 10px; align-items: center; margin-left: auto; padding-right: 5px; }

/* ribbon */
.ribbon {
  display: flex;
  height: 98px;
  border: 1px solid #8b929a;
  background: linear-gradient(#fff, #f6f7f9 40%, #e6e9ed);
  overflow: hidden;
}
.group { flex: none; display: flex; flex-direction: column; padding-top: 2px; border-right: 1px solid #b4bac2; }
.tools { display: flex; height: 77px; }
.cap { display: flex; align-items: center; justify-content: center; height: 16px; color: #59606c; }
.g-view { width: 96px; }
.g-view .tools { padding-left: 4px; }
.launch { margin: 0 7px 0 auto; }
.g-view .cap { justify-content: flex-start; padding-left: 23px; }
.g-geo { width: 116px; }
.g-geo .tools { padding-left: 4px; gap: 3px; }
.g-tech { width: 349px; }
.g-tech .tools { padding-left: 5px; }
.g-sort { width: 53px; }
.g-sort .tools, .g-tool .tools { padding-left: 5px; }
.g-tool { width: 285px; }
.g-param { width: 60px; }
.g-param .tools { padding-left: 8px; }
.big { display: flex; flex-direction: column; align-items: center; width: 42px; padding-top: 8px; color: #14284a; white-space: nowrap; }
.big.wide { width: 56px; }
.big > svg:first-child { margin-bottom: 6px; }
.big .tri { margin-top: 2px; }
.tri { color: #5c6470; }
.ribbon button:disabled { color: #989ca2; }
.split { width: 1px; height: 62px; margin: 6px 8px 0 3px; background: #c8ccd2; }
.small-grid { display: grid; grid-template-columns: 52px 50px 67px 73px; grid-auto-rows: 24px; padding-top: 4px; }
.small-col { display: grid; grid-auto-rows: 24px; padding: 4px 0 0 4px; }
.small-grid button, .small-col button { display: flex; align-items: center; gap: 2px; color: #14284a; white-space: nowrap; }
.tri.side { margin-left: 8px; }

/* work area */
.work { position: relative; flex: 1; display: flex; min-height: 616px; padding-top: 2px; border: solid #8b929a; border-width: 0 1px; background: #f0f0f0; }
.toolbox { width: 24px; background: #fff; }
.toolbox button { display: flex; align-items: center; justify-content: center; width: 24px; height: 24px; }
.toolbox .gap2 { margin-top: 2px; }
.toolbox .gap5 { margin-top: 5px; }
.toolbox .glyph { color: #4a80c8; font-size: 14px; }
.toolbox hr { width: 20px; height: 1px; margin: 7px 2px 0; border: 0; background: #888; }
.toolbox hr.near { margin: 3px 2px 1px; }
.more { display: block; width: 3px; height: 6px; margin-left: 10px; border: solid transparent; border-width: 3px 0 3px 3px; border-left-color: #000; }

.center { flex: 1; min-width: 0; display: flex; flex-direction: column; }
.drawing { flex: 1; display: grid; grid-template: 21px 1fr / 21px 1fr 17px; min-height: 0; background: #c9c9c9; }
.drawing text { font-size: 11px; fill: #00007c; }
.hruler { grid-area: 1 / 1 / 2 / 3; }
.vruler { grid-area: 2 / 1; height: 100%; min-height: 0; overflow: hidden; }
.canvas { grid-area: 2 / 2; background: #000; overflow: hidden; }
.drawing .canvas text { fill: #d0d0d0; font-size: 12px; }
.vscroll { grid-area: 1 / 3 / 3 / 4; display: flex; flex-direction: column; justify-content: space-between; align-items: center; padding: 6px 0; background: #f0f0f0; color: #a0a0a0; }
.flip { transform: rotate(180deg); transform-origin: 50% 50%; }

.logtabs { display: flex; height: 21px; padding-left: 13px; border-bottom: 1px solid #333; background: #fff; }
.logtabs button { display: flex; align-items: center; gap: 1px; height: 20px; padding: 2px 2px 0; }
.logtabs .on { margin: 0 3px; padding: 1px 3px 0; border: 1px solid #4a74b0; background: #a8c8f0; }
.endbar { width: 1px; height: 13px; margin: 5px 0 0 1px; background: #888; }
.hscroll { flex: 1; display: flex; justify-content: space-between; margin-left: 78px; padding: 2px 4px 0; background: #f0f0f0; color: #a8a8a8; }
.log { height: 129px; padding: 20px 3px 0; border-top: 4px solid #f0f0f0; background: #fff; box-shadow: inset 1px 1px #888, inset -1px 0 #888; font-size: 11px; line-height: 17px; }
.log .zh { font-size: 12px; }

.layers { width: 24px; background: #fff; }
.layers button { display: flex; align-items: center; justify-content: center; width: 24px; height: 24px; }
.layers .mt4 { margin-top: 5px; height: 23px; }
.layers button.sw { width: 14px; height: 14px; margin: 5px 5px 10px; border: 1px solid #555; }
.layers button.c14 { margin-bottom: 5px; }
.layers .c1 { background: #46ff46; }
.layers .c2 { background: #ffa0d0; }
.layers .c3 { background: #ffff74; }
.layers .c4 { background: #ffa0a0; }
.layers .c5 { background: #a04cff; }
.layers .c6 { background: #48a0a0; }
.layers .c7 { background: #ffa070; }
.layers .c8 { background: #4ca04c; }
.layers .c9 { background: #ff48a0; }
.layers .c10 { background: #48a0ff; }
.layers .c11 { background: #48ffa0; }
.layers .c12 { background: #ff48ff; }
.layers .c13 { background: #4848ff; }
.layers .c14 { background: #a0a0ff; }

/* machine panel */
.panel { width: 270px; display: grid; grid-template: 1fr 17px / 1fr 6px; background: #f0f0f0; }
.pane { position: relative; padding: 7px 2px 0 3px; min-width: 0; }
.box { border: solid #dcdcdc; border-width: 1px 0 0 1px; }
.box1 { height: 295px; padding: 8px 8px 0 4px; }
.box2 { position: relative; height: 248px; margin-top: 9px; padding: 0 9px 0 6px; border-bottom-width: 1px; }
.box3 { height: 29px; margin-top: 10px; padding-left: 6px; }
.box h2 { width: max-content; height: 16px; margin-top: -7px; padding: 0 1px; background: #f0f0f0; }
.box3 p { padding: 4px 0 0 27px; }

.combo { position: relative; display: grid; width: 65px; height: 20px; border: 1px solid #999; background: #fff; }
.combo > * { grid-area: 1 / 1; min-width: 0; }
.combo select { appearance: none; width: 100%; height: 100%; padding: 0 16px 0 1px; border: 0; border-radius: 0; background: none; font-size: 12px; overflow: hidden; }
.combo.right select { text-align-last: right; }
.combo .drop { display: flex; align-items: center; justify-content: center; justify-self: end; width: 16px; background: #e3e3e3; color: #555; pointer-events: none; }
.combo.strong { border-color: #222; }
.combo.coord { width: auto; height: 23px; border-color: #adadad; background: #e1e1e1; }
.coord select { color: #e01010; text-align-last: center; }
.coord .tri { align-self: center; justify-self: end; margin-right: 6px; color: #000; pointer-events: none; }

.jog { display: grid; grid-template: repeat(3, 32px) / 21px 32px 18px 32px 22px 32px 18px 32px; gap: 1px 0; padding: 3px 0 0 8px; }
.jog button { width: 32px; height: 32px; border: 1px solid #333; background: #f4f4f4; }
.j-up { grid-area: 1 / 4; }
.j-left { grid-area: 2 / 2; }
.j-right { grid-area: 2 / 6; }
.j-down { grid-area: 3 / 4; }
.z-up { grid-area: 1 / 8; }
.z-down { grid-area: 3 / 8; }
.jog .preview { grid-area: 3 / 1 / 4 / 3; align-self: end; width: 49px; height: 20px; border-color: #adadad; background: #e1e1e1; }

.opts { display: grid; grid-template: 20px 20px / 42px 60px 28px 48px 52px; align-items: center; margin: 8px 0 0 8px; }
.opts .combo { width: 60px; }
.opts .combo.last { grid-column: 5; width: 52px; }
.opts .step { grid-column: 4; }
.opts .wide { grid-row: 2; grid-column: 1 / 3; }
.opts .dots { grid-row: 2; grid-column: 2 / 4; justify-self: start; margin-left: 40px; color: #1010c0; font-weight: bold; }
.opts .power { grid-row: 2; grid-column: 3 / 5; justify-self: end; white-space: nowrap; }
.check { display: flex; align-items: center; gap: 2px; white-space: nowrap; }
.check input { appearance: none; flex: none; width: 13px; height: 13px; border: 1px solid #333; background: #fff; }

.btns { display: grid; grid-template-columns: repeat(3, 78px); gap: 3px 4px; }
.btns button { padding-top: 1px; border: 1px solid #adadad; background: #e1e1e1; white-space: nowrap; }
.btns button:disabled { border-color: #bfbfbf; background: #cccccc; color: #838383; }
.btns .ic { display: flex; align-items: center; padding: 1px 6px 0; }
.btns .ic span { flex: 1; text-align: center; }
.btns .lit span { padding-left: 6px; }
.btns .tri { color: #000; }
.marks { grid-template-rows: 24px 26px 26px; margin: 27px 0 0 5px; }
.ctl { grid-template-rows: repeat(4, 28px); gap: 2px 4px; margin-top: 7px; }
.ctl .ic { padding: 1px 3px 0 6px; }

.flags { display: flex; justify-content: space-between; margin: 9px 0 0 3px; }
.flaglist .check { height: 19px; }
.combo.zero { width: 92px; height: 22px; margin-top: 2px; border-color: #c8c8c8; background: #f0f0f0; color: #888; }
.combo.zero select { padding-left: 2px; color: #888; opacity: 1; }
.combo.zero .drop { background: #fff; color: #aaa; }
.dist { display: flex; align-items: center; gap: 6px; margin-top: 19px; white-space: nowrap; }
.dist > label:first-child { flex: 1; padding-top: 3px; }
.callout { position: absolute; left: -3px; bottom: 18px; padding: 5px 20px 2px 5px; border: 7px solid #fa3a3c; background: #f0f0f0; width: 115px; height: 37px; }

.pv { margin-top: 17px; margin-bottom: 58px; background: #cacaca; }
.ph { grid-column: 1 / 3; display: flex; align-items: center; gap: 5px; padding: 0 11px 2px 4px; color: #444; }
.ph i { flex: 1; height: 15px; background: #cdcdcd; }

/* annotation lying over log and panel */
.note { position: absolute; left: 480px; bottom: 51px; color: #e83a3a; pointer-events: none; white-space: nowrap; }
.note svg { margin-left: 88px; }
.note p { margin-top: -5px; font-size: 13px; }

/* status bar */
.status { display: flex; align-items: stretch; height: 27px; border: 1px solid #7e868f; background: linear-gradient(#e6e9ec, #c2c7cd 60%, #b8bec5); line-height: 24px; color: #14243a; }
.status .pos { margin-left: auto; width: 105px; padding-left: 15px; border-left: 1px solid #8d949c; font-size: 11px; }
.status .state { width: 56px; padding-left: 4px; border: solid #8d949c; border-width: 0 1px; }
.xy { display: flex; align-items: center; width: 151px; margin-left: 2px; padding: 0 6px 0 26px; border: 1px solid #a8a8a8; background: #e1e1e1; font-size: 11px; }
.status .xy .tri { margin-left: auto; color: #000; }
.fine { width: 42px; margin-left: 1px; padding-left: 7px; border-left: 1px solid #8d949c; }
.finebox { display: flex; align-items: center; width: 60px; height: 22px; background: #fff; }
.finebox input { flex: 1; min-width: 0; width: 40px; height: 20px; padding: 0 2px; border: 0; background: none; color: #777; }
.demo { width: 61px; padding-left: 4px; }

.watermark { position: absolute; right: 16px; bottom: 5px; font-size: 19px; line-height: 28px; color: rgba(128, 134, 140, .8); text-shadow: 1px 1px 0 #fff; white-space: nowrap; pointer-events: none; }
```
